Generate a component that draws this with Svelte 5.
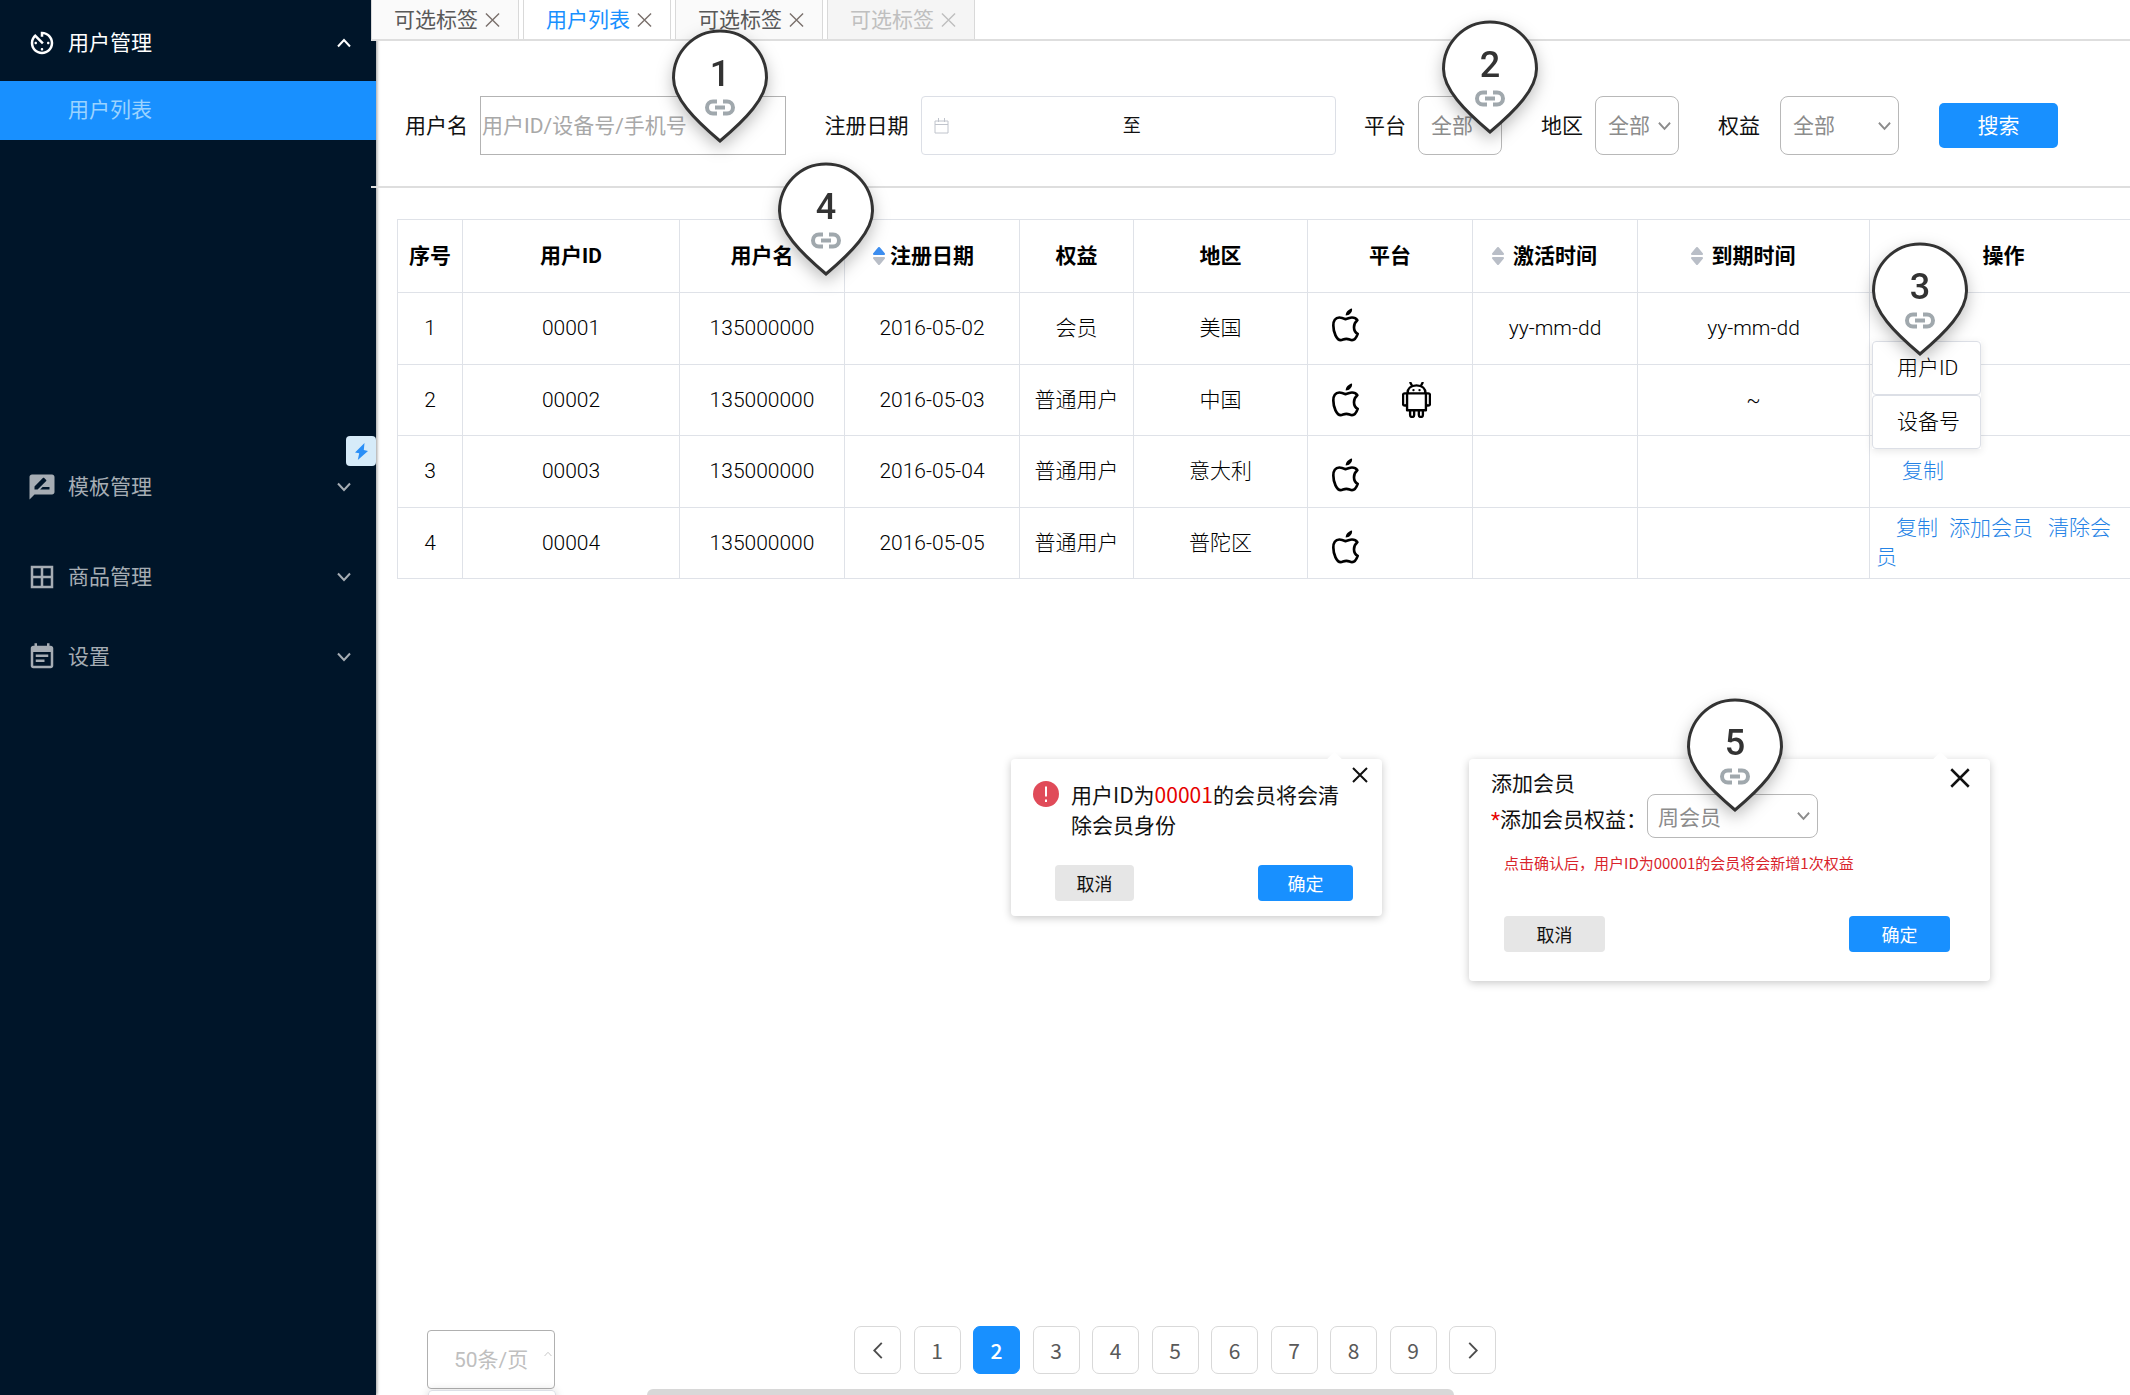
<script>
  const tabs = [
    { label: '可选标签', state: '' },
    { label: '用户列表', state: 'active' },
    { label: '可选标签', state: '' },
    { label: '可选标签', state: 'disabled' }
  ];

  const columns = [
    { key: 'no', label: '序号' },
    { key: 'id', label: '用户ID' },
    { key: 'name', label: '用户名' },
    { key: 'date', label: '注册日期', sort: 'asc' },
    { key: 'right', label: '权益' },
    { key: 'area', label: '地区' },
    { key: 'platform', label: '平台' },
    { key: 'start', label: '激活时间', sort: 'none' },
    { key: 'end', label: '到期时间', sort: 'none' },
    { key: 'action', label: '操作' }
  ];

  const rows = [
    { no: 1, id: '00001', date: '2016-05-02', right: '会员', area: '美国', android: false, align: 'top', start: 'yy-mm-dd', end: 'yy-mm-dd', actions: [] },
    { no: 2, id: '00002', date: '2016-05-03', right: '普通用户', area: '中国', android: true, align: 'middle', start: '', end: '~', actions: [] },
    { no: 3, id: '00003', date: '2016-05-04', right: '普通用户', area: '意大利', android: false, align: 'bottom', start: '', end: '', actions: ['复制'] },
    { no: 4, id: '00004', date: '2016-05-05', right: '普通用户', area: '普陀区', android: false, align: 'bottom', start: '', end: '', actions: ['复制', '添加会员', '清除会员'] }
  ];

  // Note markers lie freely over the page; x and y give the tip of each one.
  const pins = [
    { n: 1, x: 720, y: 143 },
    { n: 2, x: 1490, y: 134 },
    { n: 3, x: 1920, y: 356 },
    { n: 4, x: 826, y: 276 },
    { n: 5, x: 1735, y: 812 }
  ];

  const pages = [1, 2, 3, 4, 5, 6, 7, 8, 9];
  let current = $state(2);

  const icons = {
    timer: 'M11 17c0 .55.45 1 1 1s1-.45 1-1-.45-1-1-1-1 .45-1 1zm0-14v4h2V5.08c3.39.49 6 3.39 6 6.92 0 3.87-3.13 7-7 7s-7-3.13-7-7c0-1.68.59-3.22 1.58-4.42L12 13l1.41-1.41-6.8-6.8v.02C4.42 6.45 3 9.05 3 12c0 4.97 4.02 9 9 9 4.97 0 9-4.03 9-9s-4.03-9-9-9h-1zm7 9c0-.55-.45-1-1-1s-1 .45-1 1 .45 1 1 1 1-.45 1-1zM6 12c0 .55.45 1 1 1s1-.45 1-1-.45-1-1-1-1 .45-1 1z',
    review: 'M20 2H4c-1.1 0-1.99.9-1.99 2L2 22l4-4h14c1.1 0 2-.9 2-2V4c0-1.1-.9-2-2-2zM6 14v-2.47l6.88-6.88c.2-.2.51-.2.71 0l1.77 1.77c.2.2.2.51 0 .71L8.47 14H6zm12 0h-7.5l2-2H18v2z',
    grid: 'M3 3v18h18V3H3zm8 16H5v-6h6v6zm0-8H5V5h6v6zm8 8h-6v-6h6v6zm0-8h-6V5h6v6z',
    note: 'M17 10H7v2h10v-2zm2-7h-1V1h-2v2H8V1H6v2H5c-1.11 0-1.99.9-1.99 2L3 19c0 1.1.89 2 2 2h14c1.1 0 2-.9 2-2V5c0-1.1-.9-2-2-2zm0 16H5V8h14v11zm-5-5H7v2h7v-2z'
  };
</script>

{#snippet glyph(d)}
  <svg class="glyph" viewBox="0 0 24 24" aria-hidden="true"><path {d} /></svg>
{/snippet}

{#snippet chevron(up)}
  <svg class="chevron" viewBox="0 0 14 10" aria-hidden="true">
    <path d={up ? 'M1 8.5L7 2l6 6.5' : 'M1 1.5L7 8l6-6.5'} />
  </svg>
{/snippet}

{#snippet cross()}
  <svg class="cross" viewBox="0 0 16 16" aria-hidden="true"><path d="M1 1l14 14M15 1L1 15" /></svg>
{/snippet}

<div class="shell">
  <nav class="sidebar">
    <button class="item first open">{@render glyph(icons.timer)}<span>用户管理</span>{@render chevron(true)}</button>
    <a class="sub" href="#users">用户列表</a>
    <button class="bolt" aria-label="快捷操作">
      <svg viewBox="0 0 13 17" aria-hidden="true"><path d="M9.500 0L0 9.500l4.200.7L2.800 17 13 8l-4.200-1z" /></svg>
    </button>
    <button class="item">{@render glyph(icons.review)}<span>模板管理</span>{@render chevron(false)}</button>
    <button class="item goods">{@render glyph(icons.grid)}<span>商品管理</span>{@render chevron(false)}</button>
    <button class="item settings">{@render glyph(icons.note)}<span>设置</span>{@render chevron(false)}</button>
  </nav>

  <main>
    <div class="tabs">
      {#each tabs as tab}
        <div class="tab {tab.state}">
          <button disabled={tab.state === 'disabled'}>{tab.label}</button>
          <button class="close" aria-label="关闭" disabled={tab.state === 'disabled'}>{@render cross()}</button>
        </div>
      {/each}
    </div>

    <form class="filters" onsubmit={(e) => e.preventDefault()}>
      <label for="user">用户名</label>
      <input id="user" class="user" type="text" placeholder="用户ID/设备号/手机号" />

      <label for="from">注册日期</label>
      <div class="range">
        <svg class="calendar" viewBox="0 0 15 16" aria-hidden="true"><path d="M1 3h13v12H1zM1 6.500h13M4.500 0v4M10.500 0v4" /></svg>
        <input id="from" type="text" aria-label="开始日期" />
        <span>至</span>
        <input type="text" aria-label="结束日期" />
      </div>

      <label for="platform">平台</label>
      <div class="picker"><select id="platform"><option>全部</option></select>{@render chevron(false)}</div>

      <label for="area">地区</label>
      <div class="picker"><select id="area"><option>全部</option></select>{@render chevron(false)}</div>

      <label class="spaced" for="right">权益</label>
      <div class="picker wide"><select id="right"><option>全部</option></select>{@render chevron(false)}</div>

      <button class="search">搜索</button>
    </form>

    <div class="list">
      <table>
        <colgroup>
          {#each columns as col}<col class="c-{col.key}" />{/each}
        </colgroup>
        <thead>
          <tr>
            {#each columns as col}
              <th>
                {#if col.sort}
                  <button class="sort {col.sort}">
                    <svg viewBox="0 0 12 18" aria-hidden="true"><path class="up" d="M6 1l5 6H1z" /><path class="down" d="M6 17l5-6H1z" /></svg>
                    {col.label}
                  </button>
                {:else}{col.label}{/if}
              </th>
            {/each}
          </tr>
        </thead>
        <tbody>
          {#each rows as row}
            <tr>
              <td>{row.no}</td>
              <td>{row.id}</td>
              <td>135000000</td>
              <td>{row.date}</td>
              <td>{row.right}</td>
              <td>{row.area}</td>
              <td class="platforms {row.align}">
                <div>
                  <svg class="apple" viewBox="24 30 81 101" role="img" aria-label="iOS">
                    <path d="M65 63C58 60 52 58 46 58C34 58 28 69 28 82C28 102 38 126 50 126C56 126 59 122 67 122C75 122 78 126 84 126C92 126 98 116 101 107C94 103 90 96 90 87C90 78 94 71 100 66C96 60 90 58 84 58C77 58 72 62 65 63Z" />
                    <path class="leaf" d="M65 52C65 42 73 33 84 31C86 42 77 52 65 52Z" />
                  </svg>
                  {#if row.android}
                    <svg class="android" viewBox="234 26 86 107" role="img" aria-label="Android">
                      <path d="M249 60h56v50h-56zM250 60C250 46 260 36 277 36C294 36 304 46 304 60M259 28l5 10M295 28l-5 10M249 60h-7q-5 0-5 5v26q0 5 5 5t7-5M305 60h7q5 0 5 5v26q0 5-5 5t-7-5M258 110v14q0 6 6 6t6-6v-14M284 110v14q0 6 6 6t6-6v-14" />
                      <circle cx="268" cy="50" r="3.500" /><circle cx="286" cy="50" r="3.500" />
                    </svg>
                  {/if}
                </div>
              </td>
              <td>{row.start}</td>
              <td>{row.end}</td>
              <td class="actions">{#each row.actions as action, i}<a href="#{i}">{action}</a>{/each}</td>
            </tr>
          {/each}
        </tbody>
      </table>
      <div class="copy-menu">
        <button>用户ID</button>
        <button>设备号</button>
      </div>
    </div>

    <div class="dialogs">
      <section class="dialog confirm" role="dialog" aria-label="清除会员">
        <button class="close" aria-label="关闭">{@render cross()}</button>
        <div class="message">
          <svg class="alert" viewBox="0 0 26 26" aria-hidden="true"><circle cx="13" cy="13" r="13" /><path d="M12 5.500h2v10h-2zM12 18.500h2v2.500h-2z" /></svg>
          <p>用户ID为<b>00001</b>的会员将会清除会员身份</p>
        </div>
        <div class="buttons"><button class="cancel">取消</button><button class="ok">确定</button></div>
      </section>

      <section class="dialog add" role="dialog" aria-label="添加会员">
        <button class="close" aria-label="关闭">{@render cross()}</button>
        <h2>添加会员</h2>
        <div class="grant">
          <label for="grant"><i>*</i>添加会员权益：</label>
          <div class="picker"><select id="grant"><option>周会员</option></select>{@render chevron(false)}</div>
        </div>
        <p class="hint">点击确认后，用户ID为00001的会员将会新增1次权益</p>
        <div class="buttons"><button class="cancel">取消</button><button class="ok">确定</button></div>
      </section>
    </div>

    <footer>
      <div class="page-size">
        <div class="picker"><select aria-label="每页条数"><option>50条/页</option></select>{@render chevron(true)}</div>
        <div class="size-menu"></div>
      </div>
      <div class="pager">
        <button aria-label="上一页"><svg viewBox="0 0 10 18" aria-hidden="true"><path d="M9 1L1 9l8 8" /></svg></button>
        {#each pages as page}
          <button class:current={page === current} onclick={() => (current = page)}>{page}</button>
        {/each}
        <button aria-label="下一页"><svg viewBox="0 0 10 18" aria-hidden="true"><path d="M1 1l8 8-8 8" /></svg></button>
      </div>
    </footer>
    <div class="scrollbar"></div>
  </main>

  {#each pins as pin}
    <svg class="pin" style="left: {pin.x - 48}px; top: {pin.y - 114}px" viewBox="0 0 96 114" aria-label="标注 {pin.n}" role="img">
      <path class="drop" d="M48 112C22 90 1.500 69 1.500 49C1.500 23 22 2 48 2S94.500 23 94.500 49C94.500 69 74 90 48 112Z" />
      <text x="48" y="57" text-anchor="middle">{pin.n}</text>
      <path class="link" d="M45 72.500H41a6 6 0 0 0 0 12h4M51 72.500h4a6 6 0 0 1 0 12h-4M43 78.500h10" />
    </svg>
  {/each}
</div>

<style>
  :global(body) {
    background: #fff;
  }
  .shell {
    position: relative;
    display: flex;
    min-height: 100vh;
    overflow: hidden;
    font: 21px/30px Roboto, 'Noto Sans CJK SC', sans-serif;
    color: #111;
  }
  button,
  input,
  select {
    box-sizing: border-box;
    margin: 0;
    padding: 0;
    border: 0;
    background: none;
    font: inherit;
    color: inherit;
    outline: 0;
  }
  button {
    cursor: pointer;
  }
  svg {
    flex: none;
    display: block;
  }
  .chevron {
    width: 14px;
    height: 10px;
    fill: none;
    stroke: currentColor;
    stroke-width: 2;
  }
  .cross {
    width: 16px;
    height: 16px;
    fill: none;
    stroke: currentColor;
    stroke-width: 2;
  }

  /* Sidebar */
  .sidebar {
    flex: none;
    display: flex;
    flex-direction: column;
    width: 376px;
    background: #001529;
    color: #a6adb4;
    box-shadow: 1px 0 3px rgba(0, 0, 0, 0.4);
    z-index: 1;
  }
  .item {
    display: flex;
    align-items: center;
    gap: 11px;
    height: 42px;
    padding: 0 25px 0 27px;
    text-align: left;
  }
  .item span {
    flex: 1;
  }
  .first {
    margin: 22px 0 17px;
  }
  .open {
    color: #fff;
  }
  .goods {
    margin-top: 48px;
  }
  .settings {
    margin-top: 38px;
  }
  .glyph {
    width: 30px;
    height: 30px;
    fill: currentColor;
  }
  .sub {
    padding: 14px 0 15px 68px;
    background: #1890ff;
    color: #9bd3ff;
    text-decoration: none;
  }
  .bolt {
    display: grid;
    place-items: center;
    align-self: flex-end;
    width: 30px;
    height: 30px;
    margin-top: 296px;
    border-radius: 4px;
    background: #d6ebf9;
  }
  .bolt svg {
    width: 13px;
    height: 17px;
    fill: #2a8ff7;
  }

  main {
    flex: 1;
    min-width: 0;
    display: flex;
    flex-direction: column;
  }

  /* Page tabs */
  .tabs {
    position: relative;
    z-index: 2;
    display: flex;
    gap: 4px;
    height: 39px;
    margin-left: -5px;
    border-bottom: 2px solid #dedede;
    background: #fff;
  }
  .tab {
    box-sizing: border-box;
    display: flex;
    align-items: center;
    gap: 7px;
    width: 148px;
    padding-left: 22px;
    border: solid #d9d9d9;
    border-width: 0 1px;
    background: #fafafa;
    color: #595959;
  }
  .tab.active {
    background: #fff;
    color: #1890ff;
  }
  .tab.disabled {
    background: #f5f5f5;
    color: #bfbfbf;
  }
  .tab .cross {
    width: 15px;
    height: 18px;
    stroke-width: 1.5;
  }
  .tab .close {
    color: #7a706c;
  }
  .disabled .close {
    color: #bfbfbf;
  }

  /* Filters */
  .filters {
    position: relative;
    z-index: 1;
    display: flex;
    align-items: center;
    margin-left: -5px;
    padding: 55px 72px 31px 34px;
    border-bottom: 2px solid #dedede;
  }
  .filters label {
    flex: none;
    margin: 0 12px 0 39px;
  }
  .filters label:first-child {
    margin-left: 0;
  }
  .filters .spaced {
    margin-right: 20px;
  }
  .user {
    flex: 1 1 306px;
    min-width: 0;
    height: 59px;
    padding-left: 1px;
    border: 1px solid #b3b3b3;
  }
  .user::placeholder {
    color: #a8a8a8;
    opacity: 1;
  }
  .range {
    box-sizing: border-box;
    flex: 1 1 416px;
    min-width: 0;
    display: flex;
    align-items: center;
    height: 59px;
    padding: 0 20px 0 12px;
    border: 1px solid #dcdfe6;
    border-radius: 4px;
    font-size: 18px;
  }
  .range + label {
    margin-left: 28px;
  }
  .range input {
    flex: 1;
    min-width: 0;
  }
  .calendar {
    width: 15px;
    height: 16px;
    fill: none;
    stroke: #c0c4cc;
  }
  .picker {
    flex: none;
    display: grid;
    align-items: center;
    width: 84px;
    height: 59px;
    color: #8c8c8c;
  }
  .picker.wide {
    width: 119px;
  }
  .picker select,
  .picker .chevron {
    grid-area: 1 / 1;
  }
  .picker select {
    width: 100%;
    height: 100%;
    padding-left: 12px;
    border: 1px solid #b8b8b8;
    border-radius: 8px;
    appearance: none;
  }
  .picker .chevron {
    justify-self: end;
    width: 13px;
    margin-right: 8px;
    pointer-events: none;
  }
  .search {
    flex: none;
    width: 119px;
    height: 45px;
    margin-left: 40px;
    border-radius: 5px;
    background: #1890ff;
    color: #fff;
  }

  /* User table */
  .list {
    position: relative;
    margin: 31px -8px 0 21px;
  }
  table {
    width: 100%;
    height: 360px;
    table-layout: fixed;
    border-collapse: collapse;
    font-weight: 300;
    color: #000;
  }
  .c-no { width: 65px; }
  .c-id { width: 217px; }
  .c-name { width: 165px; }
  .c-date { width: 175px; }
  .c-right { width: 114px; }
  .c-area { width: 174px; }
  .c-platform { width: 165px; }
  .c-start { width: 165px; }
  .c-end { width: 232px; }
  th,
  td {
    padding: 0;
    border: 1px solid #dfe2e8;
    text-align: center;
  }
  th {
    height: 72px;
    font-weight: 700;
  }
  .sort {
    display: grid;
    grid-template-columns: 1fr auto 1fr;
    align-items: center;
    gap: 9px;
    width: 100%;
  }
  .sort::after {
    content: '';
  }
  .sort svg {
    justify-self: end;
    width: 12px;
    height: 18px;
    fill: #b9bec7;
    stroke: #b9bec7;
    stroke-linejoin: round;
    stroke-width: 2;
  }
  .sort.asc {
    gap: 5px;
  }
  .sort.asc .up {
    fill: #3d8ef0;
    stroke: #3d8ef0;
  }
  .platforms {
    padding: 15px 24px;
  }
  .platforms div {
    display: flex;
    align-items: center;
    gap: 43px;
    height: 33px;
  }
  .platforms.top { vertical-align: top; }
  .platforms.middle { vertical-align: middle; }
  .platforms.bottom { vertical-align: bottom; }
  .apple,
  .android {
    fill: none;
    stroke: #000;
    stroke-width: 8;
    stroke-linejoin: round;
    stroke-linecap: round;
  }
  .apple {
    width: 27px;
    height: 34px;
  }
  .android {
    width: 29px;
    height: 36px;
    stroke-width: 7;
  }
  .leaf,
  .android circle {
    fill: #000;
    stroke: none;
  }
  .actions {
    padding: 0 17px 0 6px;
    text-align: left;
    text-indent: 20px;
    line-height: 29px;
  }
  .actions a {
    color: #2583e6;
    text-decoration: none;
  }
  .actions a:nth-child(2) {
    margin: 0 15px 0 11px;
  }
  .actions a:only-child {
    margin-left: 6px;
  }
  .copy-menu {
    position: absolute;
    top: 122px;
    right: 157px;
    width: 109px;
    box-shadow: 0 2px 8px rgba(0, 0, 0, 0.1);
    font-weight: 300;
    color: #000;
  }
  .copy-menu button {
    display: block;
    width: 100%;
    height: 54px;
    padding-left: 24px;
    border: 1px solid #dcdfe6;
    border-radius: 4px;
    background: #fff;
    text-align: left;
  }

  /* Dialogs */
  .dialogs {
    display: flex;
    align-items: flex-start;
    gap: 87px;
    padding: 180px 0 40px 635px;
  }
  .dialog {
    box-sizing: border-box;
    position: relative;
    flex: none;
    border-radius: 4px;
    background: #fff;
    box-shadow: 0 2px 8px rgba(0, 0, 0, 0.22);
    font-family: 'Noto Sans CJK SC', sans-serif;
  }
  .dialog::before {
    content: '';
    position: absolute;
    top: -5px;
    right: 42px;
    width: 11px;
    height: 11px;
    background: #fff;
    transform: rotate(45deg);
  }
  .dialog .close {
    position: absolute;
    top: 8px;
    right: 14px;
  }
  .dialog p,
  .dialog h2 {
    margin: 0;
    font-weight: 400;
  }
  .confirm {
    width: 371px;
    padding: 20px 29px 15px 22px;
  }
  .message {
    display: flex;
    gap: 12px;
  }
  .message b {
    font-weight: 400;
    color: #e60000;
  }
  .alert {
    width: 26px;
    height: 26px;
    margin-top: 2px;
    fill: #e04b59;
  }
  .alert path {
    fill: #fff;
  }
  .buttons {
    display: flex;
    justify-content: space-between;
    margin-top: 26px;
    padding-left: 22px;
    font-size: 18px;
  }
  .buttons button {
    width: 101px;
    height: 36px;
    border-radius: 4px;
  }
  .buttons .cancel {
    background: #e6e6e6;
  }
  .buttons .ok {
    background: #1890ff;
    color: #fff;
  }
  .confirm .cancel {
    width: 79px;
  }
  .confirm .ok {
    width: 95px;
  }
  .add {
    width: 521px;
    padding: 11px 40px 29px 22px;
  }
  .add::before {
    right: 44px;
  }
  .add .close {
    top: 9px;
    right: 20px;
  }
  .add .cross {
    width: 20px;
    height: 20px;
  }
  h2 {
    font-size: 21px;
    line-height: 24px;
  }
  .grant {
    display: flex;
    align-items: flex-end;
  }
  .grant label {
    line-height: 36px;
    white-space: nowrap;
  }
  .grant i {
    font-family: Roboto, sans-serif;
    font-style: normal;
    color: #e60000;
  }
  .grant .picker {
    width: 171px;
    height: 44px;
  }
  .grant select {
    padding-left: 10px;
  }
  .hint {
    padding: 15px 0 0 13px;
    font-size: 15px;
    line-height: 20px;
    color: #d9242b;
  }
  .add .buttons {
    margin-top: 43px;
    padding-left: 13px;
  }

  /* Footer */
  footer {
    display: flex;
    align-items: flex-start;
    gap: 299px;
    margin-top: auto;
    padding-left: 51px;
  }
  .page-size {
    position: relative;
    padding-top: 4px;
  }
  .page-size .picker {
    width: 128px;
    color: #bfbfbf;
  }
  .page-size select {
    padding-left: 26px;
    border-radius: 4px;
    border-color: #b0b0b0;
  }
  .page-size .chevron {
    align-self: start;
    width: 8px;
    margin: 19px 3px 0 0;
    stroke-width: 1.5;
  }
  .size-menu {
    box-sizing: border-box;
    position: absolute;
    top: 100%;
    left: 1px;
    width: 128px;
    height: 40px;
    margin-top: 1px;
    border: 1px solid #dcdfe6;
    border-radius: 4px;
    box-shadow: 0 0 8px rgba(0, 0, 0, 0.15);
  }
  .pager {
    display: flex;
    justify-content: space-between;
    width: 642px;
    font-family: 'Noto Sans CJK SC', sans-serif;
    color: #595959;
  }
  .pager button {
    display: grid;
    place-items: center;
    width: 47px;
    height: 48px;
    border: 1px solid #d9d9d9;
    border-radius: 7px;
  }
  .pager .current {
    border-color: #1890ff;
    background: #1890ff;
    color: #fff;
    font-weight: 500;
  }
  .pager svg {
    width: 10px;
    height: 17px;
    fill: none;
    stroke: #4d4d4d;
    stroke-width: 2;
  }
  .scrollbar {
    width: 46%;
    height: 6px;
    margin-left: 271px;
    border-radius: 8px 8px 0 0;
    background: #d8d8d8;
  }

  /* Note markers */
  .pin {
    position: absolute;
    z-index: 3;
    width: 96px;
    height: 114px;
    overflow: visible;
    filter: drop-shadow(0 6px 8px rgba(0, 0, 0, 0.25));
  }
  .drop {
    fill: #fff;
    stroke: #333;
    stroke-width: 3;
  }
  .pin text {
    font-size: 36px;
    font-weight: 500;
    fill: #333;
  }
  .link {
    fill: none;
    stroke: #a0a8ad;
    stroke-width: 4;
  }
</style>
